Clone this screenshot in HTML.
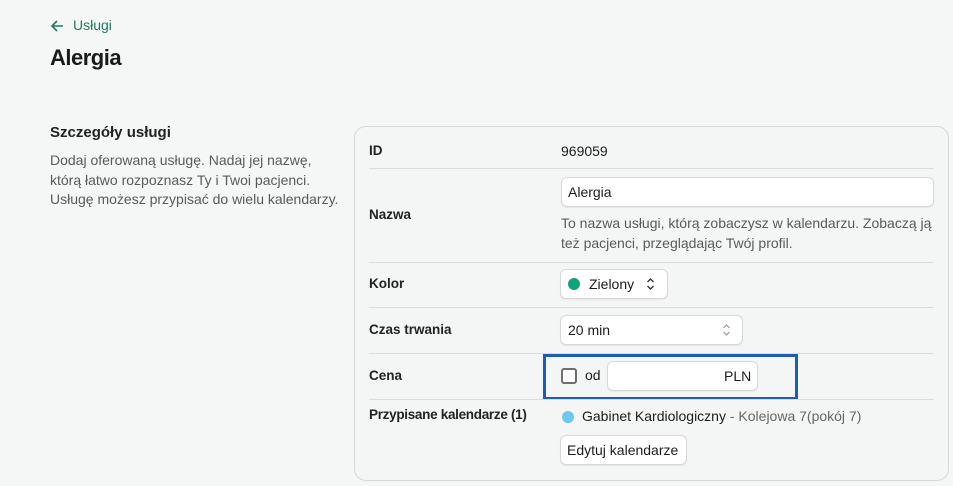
<!DOCTYPE html>
<html><head><meta charset="utf-8"><style>
*{box-sizing:border-box;margin:0;padding:0}
body{width:953px;height:486px;background:#f5f6f6;font-family:"Liberation Sans",sans-serif;color:#1c1c1c;position:relative;overflow:hidden}
.a{position:absolute;white-space:nowrap}
.lbl{font-size:13.5px;font-weight:bold;color:#222}
.hr{position:absolute;left:369px;width:565px;height:1px;background:#dcdcdc}
.box{position:absolute;background:#fff;border:1px solid #d8d8d8;border-radius:6px;box-shadow:0 1px 1px rgba(0,0,0,.06)}
.g{color:#5a5a5a;font-size:14px}
</style></head><body>
<svg class="a" style="left:50px;top:19px" width="14" height="14" viewBox="0 0 14 14"><path d="M13 7H2M7 2L2 7l5 5" stroke="#1f7a5c" stroke-width="1.6" fill="none"/></svg>
<div class="a" style="left:73px;top:17px;font-size:14px;color:#1f7a5c">Usługi</div>
<div class="a" style="left:50px;top:45px;font-size:22px;font-weight:bold;color:#1a1a1a;letter-spacing:-0.5px">Alergia</div>
<div class="a" style="left:50px;top:124px;font-size:15px;font-weight:bold;color:#222">Szczegóły usługi</div>
<div class="a g" style="left:50px;top:151px;line-height:19.5px">Dodaj oferowaną usługę. Nadaj jej nazwę,<br>którą łatwo rozpoznasz Ty i Twoi pacjenci.<br>Usługę możesz przypisać do wielu kalendarzy.</div>
<div class="a" style="left:354px;top:126px;width:595px;height:355px;border:1px solid #d8d8d8;border-radius:12px;background:#f4f5f5"></div>
<div class="a lbl" style="left:369px;top:143px">ID</div>
<div class="a" style="left:561px;top:143px;font-size:14px">969059</div>
<div class="hr" style="top:168px"></div>
<div class="a lbl" style="left:369px;top:207px">Nazwa</div>
<div class="box" style="left:561px;top:177px;width:373px;height:30px"></div>
<div class="a" style="left:568px;top:184px;font-size:14px">Alergia</div>
<div class="a g" style="left:561px;top:214px;line-height:19.5px">To nazwa usługi, którą zobaczysz w kalendarzu. Zobaczą ją<br>też pacjenci, przeglądając Twój profil.</div>
<div class="hr" style="top:262px"></div>
<div class="a lbl" style="left:369px;top:276px">Kolor</div>
<div class="box" style="left:560px;top:269px;width:108px;height:30px"></div>
<div class="a" style="left:568px;top:278px;width:12px;height:12px;border-radius:50%;background:#13a37a"></div>
<div class="a" style="left:589px;top:276px;font-size:14px">Zielony</div>
<svg class="a" style="left:646px;top:277px" width="9" height="14" viewBox="0 0 9 14"><path d="M1.5 5L4.5 2l3 3M1.5 9l3 3 3-3" stroke="#333" stroke-width="1.4" fill="none"/></svg>
<div class="hr" style="top:307px"></div>
<div class="a lbl" style="left:369px;top:322px">Czas trwania</div>
<div class="box" style="left:560px;top:315px;width:183px;height:30px"></div>
<div class="a" style="left:568px;top:322px;font-size:14px">20 min</div>
<svg class="a" style="left:722px;top:323px" width="9" height="14" viewBox="0 0 9 14"><path d="M1.5 5L4.5 2l3 3M1.5 9l3 3 3-3" stroke="#999" stroke-width="1.2" fill="none"/></svg>
<div class="hr" style="top:353px"></div>
<div class="a lbl" style="left:369px;top:368px">Cena</div>
<div class="a" style="left:543px;top:354px;width:255px;height:46px;border:3px solid #1e5cb8"></div>
<div class="a" style="left:561px;top:368px;width:16px;height:16px;border:2px solid #6e6e6e;border-radius:3px;background:#fff"></div>
<div class="a" style="left:585px;top:367px;font-size:14px">od</div>
<div class="box" style="left:607px;top:361px;width:151px;height:30px"></div>
<div class="a" style="left:724px;top:368px;font-size:14px">PLN</div>
<div class="hr" style="top:399px"></div>
<div class="a lbl" style="left:369px;top:407px;letter-spacing:-0.3px">Przypisane kalendarze (1)</div>
<div class="a" style="left:562px;top:411px;width:12px;height:12px;border-radius:50%;background:#6cc8f2"></div>
<div class="a" style="left:582px;top:408px;font-size:14px">Gabinet Kardiologiczny <span style="color:#666">- Kolejowa 7(pokój 7)</span></div>
<div class="box" style="left:560px;top:435px;width:127px;height:30px"></div>
<div class="a" style="left:567px;top:442px;font-size:14px">Edytuj kalendarze</div>
</body></html>
